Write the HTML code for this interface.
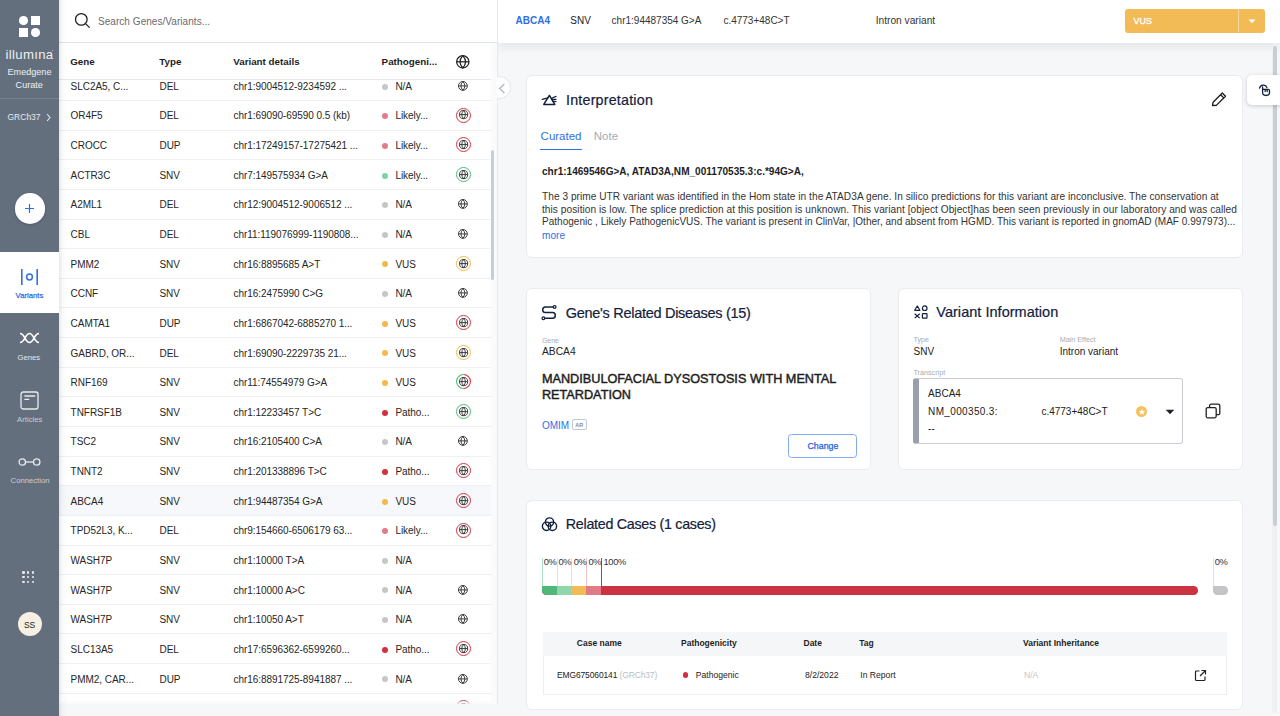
<!DOCTYPE html>
<html><head><meta charset="utf-8"><style>
html,body{margin:0;padding:0;width:1280px;height:716px;overflow:hidden;background:#fff;}
body{position:relative;font-family:"Liberation Sans",sans-serif;}
.t{position:absolute;white-space:nowrap;}
.r{position:absolute;}
</style></head><body>
<div class="r" style="left:497.00px;top:0.00px;width:783.00px;height:716.00px;background:#f6f7f9;"></div>
<div class="r" style="left:497.00px;top:0.00px;width:783.00px;height:43.00px;background:#fff;box-shadow:0 3px 10px rgba(0,0,0,0.09);"></div>
<div class="r" style="left:59.00px;top:0.00px;width:438.00px;height:716.00px;background:#fff;"></div>
<div class="r" style="left:496.00px;top:0.00px;width:1.50px;height:703.80px;background:#e4e7ec;"></div>
<div class="r" style="left:59.00px;top:99.94px;width:431.50px;height:1.00px;background:#eef0f4;"></div>
<div class="t " style="left:70.60px;top:81.73px;font-size:10.0px;line-height:10.0px;font-weight:400;color:#262626;letter-spacing:-0.05px;">SLC2A5, C...</div>
<div class="t " style="left:159.50px;top:81.73px;font-size:10.0px;line-height:10.0px;font-weight:400;color:#262626;letter-spacing:-0.05px;">DEL</div>
<div class="t " style="left:233.50px;top:81.73px;font-size:10.0px;line-height:10.0px;font-weight:400;color:#262626;letter-spacing:-0.05px;">chr1:9004512-9234592 ...</div>
<div class="r" style="left:382.00px;top:83.60px;width:6.00px;height:6.00px;background:#c6c6c6;border-radius:50%;"></div>
<div class="t " style="left:395.40px;top:81.73px;font-size:10.0px;line-height:10.0px;font-weight:400;color:#262626;letter-spacing:-0.05px;">N/A</div>
<svg class="r" style="left:457.40px;top:79.80px;width:11.80px;height:11.80px" viewBox="-5.9 -5.9 11.8 11.8"><g fill="none" stroke="#333" stroke-width="0.95"><circle r="4.43"/><path d="M0 -4.43 Q3.92 0 0 4.43 Q-3.92 0 0 -4.43 Z"/><line x1="-4.43" x2="4.43" y1="0" y2="0"/></g></svg>
<div class="r" style="left:59.00px;top:129.58px;width:431.50px;height:1.00px;background:#eef0f4;"></div>
<div class="t " style="left:70.60px;top:111.38px;font-size:10.0px;line-height:10.0px;font-weight:400;color:#262626;letter-spacing:-0.05px;">OR4F5</div>
<div class="t " style="left:159.50px;top:111.38px;font-size:10.0px;line-height:10.0px;font-weight:400;color:#262626;letter-spacing:-0.05px;">DEL</div>
<div class="t " style="left:233.50px;top:111.38px;font-size:10.0px;line-height:10.0px;font-weight:400;color:#262626;letter-spacing:-0.05px;">chr1:69090-69590 0.5 (kb)</div>
<div class="r" style="left:382.00px;top:113.24px;width:6.00px;height:6.00px;background:#e27c88;border-radius:50%;"></div>
<div class="t " style="left:395.40px;top:111.38px;font-size:10.0px;line-height:10.0px;font-weight:400;color:#262626;letter-spacing:-0.05px;">Likely...</div>
<div class="r" style="left:455.90px;top:107.54px;width:15.00px;height:15.00px;border:1.1px solid #d9333f;border-radius:50%;box-sizing:border-box;"></div>
<svg class="r" style="left:457.70px;top:109.44px;width:11.20px;height:11.20px" viewBox="-5.6 -5.6 11.2 11.2"><g fill="none" stroke="#333" stroke-width="0.95"><circle r="4.12"/><path d="M0 -4.12 Q3.68 0 0 4.12 Q-3.68 0 0 -4.12 Z"/><line x1="-4.12" x2="4.12" y1="0" y2="0"/></g></svg>
<div class="r" style="left:59.00px;top:159.22px;width:431.50px;height:1.00px;background:#eef0f4;"></div>
<div class="t " style="left:70.60px;top:141.02px;font-size:10.0px;line-height:10.0px;font-weight:400;color:#262626;letter-spacing:-0.05px;">CROCC</div>
<div class="t " style="left:159.50px;top:141.02px;font-size:10.0px;line-height:10.0px;font-weight:400;color:#262626;letter-spacing:-0.05px;">DUP</div>
<div class="t " style="left:233.50px;top:141.02px;font-size:10.0px;line-height:10.0px;font-weight:400;color:#262626;letter-spacing:-0.05px;">chr1:17249157-17275421 ...</div>
<div class="r" style="left:382.00px;top:142.88px;width:6.00px;height:6.00px;background:#e27c88;border-radius:50%;"></div>
<div class="t " style="left:395.40px;top:141.02px;font-size:10.0px;line-height:10.0px;font-weight:400;color:#262626;letter-spacing:-0.05px;">Likely...</div>
<div class="r" style="left:455.90px;top:137.18px;width:15.00px;height:15.00px;border:1.1px solid #d9333f;border-radius:50%;box-sizing:border-box;"></div>
<svg class="r" style="left:457.70px;top:139.08px;width:11.20px;height:11.20px" viewBox="-5.6 -5.6 11.2 11.2"><g fill="none" stroke="#333" stroke-width="0.95"><circle r="4.12"/><path d="M0 -4.12 Q3.68 0 0 4.12 Q-3.68 0 0 -4.12 Z"/><line x1="-4.12" x2="4.12" y1="0" y2="0"/></g></svg>
<div class="r" style="left:59.00px;top:188.86px;width:431.50px;height:1.00px;background:#eef0f4;"></div>
<div class="t " style="left:70.60px;top:170.66px;font-size:10.0px;line-height:10.0px;font-weight:400;color:#262626;letter-spacing:-0.05px;">ACTR3C</div>
<div class="t " style="left:159.50px;top:170.66px;font-size:10.0px;line-height:10.0px;font-weight:400;color:#262626;letter-spacing:-0.05px;">SNV</div>
<div class="t " style="left:233.50px;top:170.66px;font-size:10.0px;line-height:10.0px;font-weight:400;color:#262626;letter-spacing:-0.05px;">chr7:149575934 G&gt;A</div>
<div class="r" style="left:382.00px;top:172.52px;width:6.00px;height:6.00px;background:#7fd3a2;border-radius:50%;"></div>
<div class="t " style="left:395.40px;top:170.66px;font-size:10.0px;line-height:10.0px;font-weight:400;color:#262626;letter-spacing:-0.05px;">Likely...</div>
<div class="r" style="left:455.90px;top:166.82px;width:15.00px;height:15.00px;border:1.1px solid #4cbb73;border-radius:50%;box-sizing:border-box;"></div>
<svg class="r" style="left:457.70px;top:168.72px;width:11.20px;height:11.20px" viewBox="-5.6 -5.6 11.2 11.2"><g fill="none" stroke="#333" stroke-width="0.95"><circle r="4.12"/><path d="M0 -4.12 Q3.68 0 0 4.12 Q-3.68 0 0 -4.12 Z"/><line x1="-4.12" x2="4.12" y1="0" y2="0"/></g></svg>
<div class="r" style="left:59.00px;top:218.50px;width:431.50px;height:1.00px;background:#eef0f4;"></div>
<div class="t " style="left:70.60px;top:200.29px;font-size:10.0px;line-height:10.0px;font-weight:400;color:#262626;letter-spacing:-0.05px;">A2ML1</div>
<div class="t " style="left:159.50px;top:200.29px;font-size:10.0px;line-height:10.0px;font-weight:400;color:#262626;letter-spacing:-0.05px;">DEL</div>
<div class="t " style="left:233.50px;top:200.29px;font-size:10.0px;line-height:10.0px;font-weight:400;color:#262626;letter-spacing:-0.05px;">chr12:9004512-9006512 ...</div>
<div class="r" style="left:382.00px;top:202.16px;width:6.00px;height:6.00px;background:#c6c6c6;border-radius:50%;"></div>
<div class="t " style="left:395.40px;top:200.29px;font-size:10.0px;line-height:10.0px;font-weight:400;color:#262626;letter-spacing:-0.05px;">N/A</div>
<svg class="r" style="left:457.40px;top:198.36px;width:11.80px;height:11.80px" viewBox="-5.9 -5.9 11.8 11.8"><g fill="none" stroke="#333" stroke-width="0.95"><circle r="4.43"/><path d="M0 -4.43 Q3.92 0 0 4.43 Q-3.92 0 0 -4.43 Z"/><line x1="-4.43" x2="4.43" y1="0" y2="0"/></g></svg>
<div class="r" style="left:59.00px;top:248.14px;width:431.50px;height:1.00px;background:#eef0f4;"></div>
<div class="t " style="left:70.60px;top:229.93px;font-size:10.0px;line-height:10.0px;font-weight:400;color:#262626;letter-spacing:-0.05px;">CBL</div>
<div class="t " style="left:159.50px;top:229.93px;font-size:10.0px;line-height:10.0px;font-weight:400;color:#262626;letter-spacing:-0.05px;">DEL</div>
<div class="t " style="left:233.50px;top:229.93px;font-size:10.0px;line-height:10.0px;font-weight:400;color:#262626;letter-spacing:-0.05px;">chr11:119076999-1190808...</div>
<div class="r" style="left:382.00px;top:231.80px;width:6.00px;height:6.00px;background:#c6c6c6;border-radius:50%;"></div>
<div class="t " style="left:395.40px;top:229.93px;font-size:10.0px;line-height:10.0px;font-weight:400;color:#262626;letter-spacing:-0.05px;">N/A</div>
<svg class="r" style="left:457.40px;top:228.00px;width:11.80px;height:11.80px" viewBox="-5.9 -5.9 11.8 11.8"><g fill="none" stroke="#333" stroke-width="0.95"><circle r="4.43"/><path d="M0 -4.43 Q3.92 0 0 4.43 Q-3.92 0 0 -4.43 Z"/><line x1="-4.43" x2="4.43" y1="0" y2="0"/></g></svg>
<div class="r" style="left:59.00px;top:277.78px;width:431.50px;height:1.00px;background:#eef0f4;"></div>
<div class="t " style="left:70.60px;top:259.58px;font-size:10.0px;line-height:10.0px;font-weight:400;color:#262626;letter-spacing:-0.05px;">PMM2</div>
<div class="t " style="left:159.50px;top:259.58px;font-size:10.0px;line-height:10.0px;font-weight:400;color:#262626;letter-spacing:-0.05px;">SNV</div>
<div class="t " style="left:233.50px;top:259.58px;font-size:10.0px;line-height:10.0px;font-weight:400;color:#262626;letter-spacing:-0.05px;">chr16:8895685 A&gt;T</div>
<div class="r" style="left:382.00px;top:261.44px;width:6.00px;height:6.00px;background:#f2b94b;border-radius:50%;"></div>
<div class="t " style="left:395.40px;top:259.58px;font-size:10.0px;line-height:10.0px;font-weight:400;color:#262626;letter-spacing:-0.05px;">VUS</div>
<div class="r" style="left:455.90px;top:255.74px;width:15.00px;height:15.00px;border:1.1px solid #f0b94a;border-radius:50%;box-sizing:border-box;"></div>
<svg class="r" style="left:457.70px;top:257.64px;width:11.20px;height:11.20px" viewBox="-5.6 -5.6 11.2 11.2"><g fill="none" stroke="#333" stroke-width="0.95"><circle r="4.12"/><path d="M0 -4.12 Q3.68 0 0 4.12 Q-3.68 0 0 -4.12 Z"/><line x1="-4.12" x2="4.12" y1="0" y2="0"/></g></svg>
<div class="r" style="left:59.00px;top:307.42px;width:431.50px;height:1.00px;background:#eef0f4;"></div>
<div class="t " style="left:70.60px;top:289.22px;font-size:10.0px;line-height:10.0px;font-weight:400;color:#262626;letter-spacing:-0.05px;">CCNF</div>
<div class="t " style="left:159.50px;top:289.22px;font-size:10.0px;line-height:10.0px;font-weight:400;color:#262626;letter-spacing:-0.05px;">SNV</div>
<div class="t " style="left:233.50px;top:289.22px;font-size:10.0px;line-height:10.0px;font-weight:400;color:#262626;letter-spacing:-0.05px;">chr16:2475990 C&gt;G</div>
<div class="r" style="left:382.00px;top:291.08px;width:6.00px;height:6.00px;background:#c6c6c6;border-radius:50%;"></div>
<div class="t " style="left:395.40px;top:289.22px;font-size:10.0px;line-height:10.0px;font-weight:400;color:#262626;letter-spacing:-0.05px;">N/A</div>
<svg class="r" style="left:457.40px;top:287.28px;width:11.80px;height:11.80px" viewBox="-5.9 -5.9 11.8 11.8"><g fill="none" stroke="#333" stroke-width="0.95"><circle r="4.43"/><path d="M0 -4.43 Q3.92 0 0 4.43 Q-3.92 0 0 -4.43 Z"/><line x1="-4.43" x2="4.43" y1="0" y2="0"/></g></svg>
<div class="r" style="left:59.00px;top:337.06px;width:431.50px;height:1.00px;background:#eef0f4;"></div>
<div class="t " style="left:70.60px;top:318.86px;font-size:10.0px;line-height:10.0px;font-weight:400;color:#262626;letter-spacing:-0.05px;">CAMTA1</div>
<div class="t " style="left:159.50px;top:318.86px;font-size:10.0px;line-height:10.0px;font-weight:400;color:#262626;letter-spacing:-0.05px;">DUP</div>
<div class="t " style="left:233.50px;top:318.86px;font-size:10.0px;line-height:10.0px;font-weight:400;color:#262626;letter-spacing:-0.05px;">chr1:6867042-6885270 1...</div>
<div class="r" style="left:382.00px;top:320.72px;width:6.00px;height:6.00px;background:#f2b94b;border-radius:50%;"></div>
<div class="t " style="left:395.40px;top:318.86px;font-size:10.0px;line-height:10.0px;font-weight:400;color:#262626;letter-spacing:-0.05px;">VUS</div>
<div class="r" style="left:455.90px;top:315.02px;width:15.00px;height:15.00px;border:1.1px solid #d9333f;border-radius:50%;box-sizing:border-box;"></div>
<svg class="r" style="left:457.70px;top:316.92px;width:11.20px;height:11.20px" viewBox="-5.6 -5.6 11.2 11.2"><g fill="none" stroke="#333" stroke-width="0.95"><circle r="4.12"/><path d="M0 -4.12 Q3.68 0 0 4.12 Q-3.68 0 0 -4.12 Z"/><line x1="-4.12" x2="4.12" y1="0" y2="0"/></g></svg>
<div class="r" style="left:59.00px;top:366.70px;width:431.50px;height:1.00px;background:#eef0f4;"></div>
<div class="t " style="left:70.60px;top:348.50px;font-size:10.0px;line-height:10.0px;font-weight:400;color:#262626;letter-spacing:-0.05px;">GABRD, OR...</div>
<div class="t " style="left:159.50px;top:348.50px;font-size:10.0px;line-height:10.0px;font-weight:400;color:#262626;letter-spacing:-0.05px;">DEL</div>
<div class="t " style="left:233.50px;top:348.50px;font-size:10.0px;line-height:10.0px;font-weight:400;color:#262626;letter-spacing:-0.05px;">chr1:69090-2229735 21...</div>
<div class="r" style="left:382.00px;top:350.36px;width:6.00px;height:6.00px;background:#f2b94b;border-radius:50%;"></div>
<div class="t " style="left:395.40px;top:348.50px;font-size:10.0px;line-height:10.0px;font-weight:400;color:#262626;letter-spacing:-0.05px;">VUS</div>
<div class="r" style="left:455.90px;top:344.66px;width:15.00px;height:15.00px;border:1.1px solid #f0b94a;border-radius:50%;box-sizing:border-box;"></div>
<svg class="r" style="left:457.70px;top:346.56px;width:11.20px;height:11.20px" viewBox="-5.6 -5.6 11.2 11.2"><g fill="none" stroke="#333" stroke-width="0.95"><circle r="4.12"/><path d="M0 -4.12 Q3.68 0 0 4.12 Q-3.68 0 0 -4.12 Z"/><line x1="-4.12" x2="4.12" y1="0" y2="0"/></g></svg>
<div class="r" style="left:59.00px;top:396.34px;width:431.50px;height:1.00px;background:#eef0f4;"></div>
<div class="t " style="left:70.60px;top:378.13px;font-size:10.0px;line-height:10.0px;font-weight:400;color:#262626;letter-spacing:-0.05px;">RNF169</div>
<div class="t " style="left:159.50px;top:378.13px;font-size:10.0px;line-height:10.0px;font-weight:400;color:#262626;letter-spacing:-0.05px;">SNV</div>
<div class="t " style="left:233.50px;top:378.13px;font-size:10.0px;line-height:10.0px;font-weight:400;color:#262626;letter-spacing:-0.05px;">chr11:74554979 G&gt;A</div>
<div class="r" style="left:382.00px;top:380.00px;width:6.00px;height:6.00px;background:#f2b94b;border-radius:50%;"></div>
<div class="t " style="left:395.40px;top:378.13px;font-size:10.0px;line-height:10.0px;font-weight:400;color:#262626;letter-spacing:-0.05px;">VUS</div>
<svg class="r" style="left:455.90px;top:374.30px;width:15px;height:15px" viewBox="0 0 15 15"><path d="M7.5 0.55 A6.95 6.95 0 0 1 7.5 14.45" fill="none" stroke="#d9333f" stroke-width="1.1"/><path d="M7.5 14.45 A6.95 6.95 0 0 1 7.5 0.55" fill="none" stroke="#4cbb73" stroke-width="1.1"/></svg>
<svg class="r" style="left:457.70px;top:376.20px;width:11.20px;height:11.20px" viewBox="-5.6 -5.6 11.2 11.2"><g fill="none" stroke="#333" stroke-width="0.95"><circle r="4.12"/><path d="M0 -4.12 Q3.68 0 0 4.12 Q-3.68 0 0 -4.12 Z"/><line x1="-4.12" x2="4.12" y1="0" y2="0"/></g></svg>
<div class="r" style="left:59.00px;top:425.98px;width:431.50px;height:1.00px;background:#eef0f4;"></div>
<div class="t " style="left:70.60px;top:407.78px;font-size:10.0px;line-height:10.0px;font-weight:400;color:#262626;letter-spacing:-0.05px;">TNFRSF1B</div>
<div class="t " style="left:159.50px;top:407.78px;font-size:10.0px;line-height:10.0px;font-weight:400;color:#262626;letter-spacing:-0.05px;">SNV</div>
<div class="t " style="left:233.50px;top:407.78px;font-size:10.0px;line-height:10.0px;font-weight:400;color:#262626;letter-spacing:-0.05px;">chr1:12233457 T&gt;C</div>
<div class="r" style="left:382.00px;top:409.64px;width:6.00px;height:6.00px;background:#d3303f;border-radius:50%;"></div>
<div class="t " style="left:395.40px;top:407.78px;font-size:10.0px;line-height:10.0px;font-weight:400;color:#262626;letter-spacing:-0.05px;">Patho...</div>
<div class="r" style="left:455.90px;top:403.94px;width:15.00px;height:15.00px;border:1.1px solid #4cbb73;border-radius:50%;box-sizing:border-box;"></div>
<svg class="r" style="left:457.70px;top:405.84px;width:11.20px;height:11.20px" viewBox="-5.6 -5.6 11.2 11.2"><g fill="none" stroke="#333" stroke-width="0.95"><circle r="4.12"/><path d="M0 -4.12 Q3.68 0 0 4.12 Q-3.68 0 0 -4.12 Z"/><line x1="-4.12" x2="4.12" y1="0" y2="0"/></g></svg>
<div class="r" style="left:59.00px;top:455.62px;width:431.50px;height:1.00px;background:#eef0f4;"></div>
<div class="t " style="left:70.60px;top:437.42px;font-size:10.0px;line-height:10.0px;font-weight:400;color:#262626;letter-spacing:-0.05px;">TSC2</div>
<div class="t " style="left:159.50px;top:437.42px;font-size:10.0px;line-height:10.0px;font-weight:400;color:#262626;letter-spacing:-0.05px;">SNV</div>
<div class="t " style="left:233.50px;top:437.42px;font-size:10.0px;line-height:10.0px;font-weight:400;color:#262626;letter-spacing:-0.05px;">chr16:2105400 C&gt;A</div>
<div class="r" style="left:382.00px;top:439.28px;width:6.00px;height:6.00px;background:#c6c6c6;border-radius:50%;"></div>
<div class="t " style="left:395.40px;top:437.42px;font-size:10.0px;line-height:10.0px;font-weight:400;color:#262626;letter-spacing:-0.05px;">N/A</div>
<svg class="r" style="left:457.40px;top:435.48px;width:11.80px;height:11.80px" viewBox="-5.9 -5.9 11.8 11.8"><g fill="none" stroke="#333" stroke-width="0.95"><circle r="4.43"/><path d="M0 -4.43 Q3.92 0 0 4.43 Q-3.92 0 0 -4.43 Z"/><line x1="-4.43" x2="4.43" y1="0" y2="0"/></g></svg>
<div class="r" style="left:59.00px;top:485.26px;width:431.50px;height:1.00px;background:#eef0f4;"></div>
<div class="t " style="left:70.60px;top:467.06px;font-size:10.0px;line-height:10.0px;font-weight:400;color:#262626;letter-spacing:-0.05px;">TNNT2</div>
<div class="t " style="left:159.50px;top:467.06px;font-size:10.0px;line-height:10.0px;font-weight:400;color:#262626;letter-spacing:-0.05px;">SNV</div>
<div class="t " style="left:233.50px;top:467.06px;font-size:10.0px;line-height:10.0px;font-weight:400;color:#262626;letter-spacing:-0.05px;">chr1:201338896 T&gt;C</div>
<div class="r" style="left:382.00px;top:468.92px;width:6.00px;height:6.00px;background:#d3303f;border-radius:50%;"></div>
<div class="t " style="left:395.40px;top:467.06px;font-size:10.0px;line-height:10.0px;font-weight:400;color:#262626;letter-spacing:-0.05px;">Patho...</div>
<div class="r" style="left:455.90px;top:463.22px;width:15.00px;height:15.00px;border:1.1px solid #d9333f;border-radius:50%;box-sizing:border-box;"></div>
<svg class="r" style="left:457.70px;top:465.12px;width:11.20px;height:11.20px" viewBox="-5.6 -5.6 11.2 11.2"><g fill="none" stroke="#333" stroke-width="0.95"><circle r="4.12"/><path d="M0 -4.12 Q3.68 0 0 4.12 Q-3.68 0 0 -4.12 Z"/><line x1="-4.12" x2="4.12" y1="0" y2="0"/></g></svg>
<div class="r" style="left:59.00px;top:485.76px;width:431.50px;height:29.64px;background:#f7f8fb;"></div>
<div class="r" style="left:59.00px;top:514.90px;width:431.50px;height:1.00px;background:#eef0f4;"></div>
<div class="t " style="left:70.60px;top:496.70px;font-size:10.0px;line-height:10.0px;font-weight:400;color:#262626;letter-spacing:-0.05px;">ABCA4</div>
<div class="t " style="left:159.50px;top:496.70px;font-size:10.0px;line-height:10.0px;font-weight:400;color:#262626;letter-spacing:-0.05px;">SNV</div>
<div class="t " style="left:233.50px;top:496.70px;font-size:10.0px;line-height:10.0px;font-weight:400;color:#262626;letter-spacing:-0.05px;">chr1:94487354 G&gt;A</div>
<div class="r" style="left:382.00px;top:498.56px;width:6.00px;height:6.00px;background:#f2b94b;border-radius:50%;"></div>
<div class="t " style="left:395.40px;top:496.70px;font-size:10.0px;line-height:10.0px;font-weight:400;color:#262626;letter-spacing:-0.05px;">VUS</div>
<div class="r" style="left:455.90px;top:492.86px;width:15.00px;height:15.00px;border:1.1px solid #d9333f;border-radius:50%;box-sizing:border-box;"></div>
<svg class="r" style="left:457.70px;top:494.76px;width:11.20px;height:11.20px" viewBox="-5.6 -5.6 11.2 11.2"><g fill="none" stroke="#333" stroke-width="0.95"><circle r="4.12"/><path d="M0 -4.12 Q3.68 0 0 4.12 Q-3.68 0 0 -4.12 Z"/><line x1="-4.12" x2="4.12" y1="0" y2="0"/></g></svg>
<div class="r" style="left:59.00px;top:544.54px;width:431.50px;height:1.00px;background:#eef0f4;"></div>
<div class="t " style="left:70.60px;top:526.34px;font-size:10.0px;line-height:10.0px;font-weight:400;color:#262626;letter-spacing:-0.05px;">TPD52L3, K...</div>
<div class="t " style="left:159.50px;top:526.34px;font-size:10.0px;line-height:10.0px;font-weight:400;color:#262626;letter-spacing:-0.05px;">DEL</div>
<div class="t " style="left:233.50px;top:526.34px;font-size:10.0px;line-height:10.0px;font-weight:400;color:#262626;letter-spacing:-0.05px;">chr9:154660-6506179 63...</div>
<div class="r" style="left:382.00px;top:528.20px;width:6.00px;height:6.00px;background:#e27c88;border-radius:50%;"></div>
<div class="t " style="left:395.40px;top:526.34px;font-size:10.0px;line-height:10.0px;font-weight:400;color:#262626;letter-spacing:-0.05px;">Likely...</div>
<div class="r" style="left:455.90px;top:522.50px;width:15.00px;height:15.00px;border:1.1px solid #d9333f;border-radius:50%;box-sizing:border-box;"></div>
<svg class="r" style="left:457.70px;top:524.40px;width:11.20px;height:11.20px" viewBox="-5.6 -5.6 11.2 11.2"><g fill="none" stroke="#333" stroke-width="0.95"><circle r="4.12"/><path d="M0 -4.12 Q3.68 0 0 4.12 Q-3.68 0 0 -4.12 Z"/><line x1="-4.12" x2="4.12" y1="0" y2="0"/></g></svg>
<div class="r" style="left:59.00px;top:574.18px;width:431.50px;height:1.00px;background:#eef0f4;"></div>
<div class="t " style="left:70.60px;top:555.98px;font-size:10.0px;line-height:10.0px;font-weight:400;color:#262626;letter-spacing:-0.05px;">WASH7P</div>
<div class="t " style="left:159.50px;top:555.98px;font-size:10.0px;line-height:10.0px;font-weight:400;color:#262626;letter-spacing:-0.05px;">SNV</div>
<div class="t " style="left:233.50px;top:555.98px;font-size:10.0px;line-height:10.0px;font-weight:400;color:#262626;letter-spacing:-0.05px;">chr1:10000 T&gt;A</div>
<div class="r" style="left:382.00px;top:557.84px;width:6.00px;height:6.00px;background:#c6c6c6;border-radius:50%;"></div>
<div class="t " style="left:395.40px;top:555.98px;font-size:10.0px;line-height:10.0px;font-weight:400;color:#262626;letter-spacing:-0.05px;">N/A</div>
<div class="r" style="left:59.00px;top:603.82px;width:431.50px;height:1.00px;background:#eef0f4;"></div>
<div class="t " style="left:70.60px;top:585.62px;font-size:10.0px;line-height:10.0px;font-weight:400;color:#262626;letter-spacing:-0.05px;">WASH7P</div>
<div class="t " style="left:159.50px;top:585.62px;font-size:10.0px;line-height:10.0px;font-weight:400;color:#262626;letter-spacing:-0.05px;">SNV</div>
<div class="t " style="left:233.50px;top:585.62px;font-size:10.0px;line-height:10.0px;font-weight:400;color:#262626;letter-spacing:-0.05px;">chr1:10000 A&gt;C</div>
<div class="r" style="left:382.00px;top:587.48px;width:6.00px;height:6.00px;background:#c6c6c6;border-radius:50%;"></div>
<div class="t " style="left:395.40px;top:585.62px;font-size:10.0px;line-height:10.0px;font-weight:400;color:#262626;letter-spacing:-0.05px;">N/A</div>
<svg class="r" style="left:457.40px;top:583.68px;width:11.80px;height:11.80px" viewBox="-5.9 -5.9 11.8 11.8"><g fill="none" stroke="#333" stroke-width="0.95"><circle r="4.43"/><path d="M0 -4.43 Q3.92 0 0 4.43 Q-3.92 0 0 -4.43 Z"/><line x1="-4.43" x2="4.43" y1="0" y2="0"/></g></svg>
<div class="r" style="left:59.00px;top:633.46px;width:431.50px;height:1.00px;background:#eef0f4;"></div>
<div class="t " style="left:70.60px;top:615.25px;font-size:10.0px;line-height:10.0px;font-weight:400;color:#262626;letter-spacing:-0.05px;">WASH7P</div>
<div class="t " style="left:159.50px;top:615.25px;font-size:10.0px;line-height:10.0px;font-weight:400;color:#262626;letter-spacing:-0.05px;">SNV</div>
<div class="t " style="left:233.50px;top:615.25px;font-size:10.0px;line-height:10.0px;font-weight:400;color:#262626;letter-spacing:-0.05px;">chr1:10050 A&gt;T</div>
<div class="r" style="left:382.00px;top:617.12px;width:6.00px;height:6.00px;background:#c6c6c6;border-radius:50%;"></div>
<div class="t " style="left:395.40px;top:615.25px;font-size:10.0px;line-height:10.0px;font-weight:400;color:#262626;letter-spacing:-0.05px;">N/A</div>
<svg class="r" style="left:457.40px;top:613.32px;width:11.80px;height:11.80px" viewBox="-5.9 -5.9 11.8 11.8"><g fill="none" stroke="#333" stroke-width="0.95"><circle r="4.43"/><path d="M0 -4.43 Q3.92 0 0 4.43 Q-3.92 0 0 -4.43 Z"/><line x1="-4.43" x2="4.43" y1="0" y2="0"/></g></svg>
<div class="r" style="left:59.00px;top:663.10px;width:431.50px;height:1.00px;background:#eef0f4;"></div>
<div class="t " style="left:70.60px;top:644.89px;font-size:10.0px;line-height:10.0px;font-weight:400;color:#262626;letter-spacing:-0.05px;">SLC13A5</div>
<div class="t " style="left:159.50px;top:644.89px;font-size:10.0px;line-height:10.0px;font-weight:400;color:#262626;letter-spacing:-0.05px;">DEL</div>
<div class="t " style="left:233.50px;top:644.89px;font-size:10.0px;line-height:10.0px;font-weight:400;color:#262626;letter-spacing:-0.05px;">chr17:6596362-6599260...</div>
<div class="r" style="left:382.00px;top:646.76px;width:6.00px;height:6.00px;background:#d3303f;border-radius:50%;"></div>
<div class="t " style="left:395.40px;top:644.89px;font-size:10.0px;line-height:10.0px;font-weight:400;color:#262626;letter-spacing:-0.05px;">Patho...</div>
<div class="r" style="left:455.90px;top:641.06px;width:15.00px;height:15.00px;border:1.1px solid #d9333f;border-radius:50%;box-sizing:border-box;"></div>
<svg class="r" style="left:457.70px;top:642.96px;width:11.20px;height:11.20px" viewBox="-5.6 -5.6 11.2 11.2"><g fill="none" stroke="#333" stroke-width="0.95"><circle r="4.12"/><path d="M0 -4.12 Q3.68 0 0 4.12 Q-3.68 0 0 -4.12 Z"/><line x1="-4.12" x2="4.12" y1="0" y2="0"/></g></svg>
<div class="r" style="left:59.00px;top:692.74px;width:431.50px;height:1.00px;background:#eef0f4;"></div>
<div class="t " style="left:70.60px;top:674.53px;font-size:10.0px;line-height:10.0px;font-weight:400;color:#262626;letter-spacing:-0.05px;">PMM2, CAR...</div>
<div class="t " style="left:159.50px;top:674.53px;font-size:10.0px;line-height:10.0px;font-weight:400;color:#262626;letter-spacing:-0.05px;">DUP</div>
<div class="t " style="left:233.50px;top:674.53px;font-size:10.0px;line-height:10.0px;font-weight:400;color:#262626;letter-spacing:-0.05px;">chr16:8891725-8941887 ...</div>
<div class="r" style="left:382.00px;top:676.40px;width:6.00px;height:6.00px;background:#c6c6c6;border-radius:50%;"></div>
<div class="t " style="left:395.40px;top:674.53px;font-size:10.0px;line-height:10.0px;font-weight:400;color:#262626;letter-spacing:-0.05px;">N/A</div>
<svg class="r" style="left:457.40px;top:672.60px;width:11.80px;height:11.80px" viewBox="-5.9 -5.9 11.8 11.8"><g fill="none" stroke="#333" stroke-width="0.95"><circle r="4.43"/><path d="M0 -4.43 Q3.92 0 0 4.43 Q-3.92 0 0 -4.43 Z"/><line x1="-4.43" x2="4.43" y1="0" y2="0"/></g></svg>
<div class="r" style="left:59.00px;top:722.38px;width:431.50px;height:1.00px;background:#eef0f4;"></div>
<div class="t " style="left:70.60px;top:704.18px;font-size:10.0px;line-height:10.0px;font-weight:400;color:#262626;letter-spacing:-0.05px;"></div>
<div class="t " style="left:159.50px;top:704.18px;font-size:10.0px;line-height:10.0px;font-weight:400;color:#262626;letter-spacing:-0.05px;"></div>
<div class="t " style="left:233.50px;top:704.18px;font-size:10.0px;line-height:10.0px;font-weight:400;color:#262626;letter-spacing:-0.05px;"></div>
<div class="r" style="left:455.90px;top:700.34px;width:15.00px;height:15.00px;border:1.1px solid #d9333f;border-radius:50%;box-sizing:border-box;"></div>
<svg class="r" style="left:457.70px;top:702.24px;width:11.20px;height:11.20px" viewBox="-5.6 -5.6 11.2 11.2"><g fill="none" stroke="#333" stroke-width="0.95"><circle r="4.12"/><path d="M0 -4.12 Q3.68 0 0 4.12 Q-3.68 0 0 -4.12 Z"/><line x1="-4.12" x2="4.12" y1="0" y2="0"/></g></svg>
<div class="r" style="left:59.00px;top:43.00px;width:431.80px;height:37.20px;background:#fff;border-bottom:1px solid #e8eaef;box-sizing:border-box;"></div>
<div class="t " style="left:70.25px;top:56.90px;font-size:9.8px;line-height:9.8px;font-weight:700;color:#1e1e1e;">Gene</div>
<div class="t " style="left:159.30px;top:56.90px;font-size:9.8px;line-height:9.8px;font-weight:700;color:#1e1e1e;">Type</div>
<div class="t " style="left:233.20px;top:56.90px;font-size:9.8px;line-height:9.8px;font-weight:700;color:#1e1e1e;">Variant details</div>
<div class="t " style="left:381.60px;top:56.90px;font-size:9.8px;line-height:9.8px;font-weight:700;color:#1e1e1e;">Pathogeni...</div>
<svg class="r" style="left:455.00px;top:54.00px;width:15.60px;height:15.60px" viewBox="-7.8 -7.8 15.6 15.6"><g fill="none" stroke="#222" stroke-width="1.25"><circle r="6.17"/><path d="M0 -6.17 Q5.44 0 0 6.17 Q-5.44 0 0 -6.17 Z"/><line x1="-6.17" x2="6.17" y1="0" y2="0"/></g></svg>
<div class="r" style="left:59.00px;top:0.00px;width:438.00px;height:43.40px;background:#fff;border-bottom:1px solid #dfe3ea;box-sizing:border-box;"></div>
<svg class="r" style="left:74px;top:12px;width:18px;height:18px" viewBox="0 0 18 18"><circle cx="7.3" cy="7.4" r="5.8" fill="none" stroke="#222" stroke-width="1.3"/><line x1="11.5" y1="11.6" x2="15.3" y2="15.4" stroke="#222" stroke-width="1.3" stroke-linecap="round"/></svg>
<div class="t " style="left:98.00px;top:16.73px;font-size:10.0px;line-height:10.0px;font-weight:400;color:#6b6b6b;letter-spacing:0.05px;">Search Genes/Variants...</div>
<div class="r" style="left:490.50px;top:43.40px;width:6.00px;height:672.60px;background:#fafbfc;"></div>
<div class="r" style="left:490.60px;top:150.10px;width:3.30px;height:130.20px;background:#c9cdd6;border-radius:2px;"></div>
<div class="r" style="left:59.00px;top:699.50px;width:431.50px;height:4.30px;background:linear-gradient(to bottom, rgba(246,247,249,0), rgba(246,247,249,0.8));"></div>
<div class="r" style="left:59.00px;top:703.80px;width:438.50px;height:12.20px;background:#f6f7f9;"></div>
<div class="r" style="left:59.00px;top:0.00px;width:9.00px;height:716.00px;background:linear-gradient(to right, rgba(0,0,0,0.09), rgba(0,0,0,0.02) 40%, rgba(0,0,0,0));"></div>
<div class="r" style="left:0.00px;top:0.00px;width:59.00px;height:716.00px;background:#646f7e;"></div>
<div class="r" style="left:19.00px;top:16.30px;width:8.60px;height:8.60px;background:#fff;border-radius:50%;"></div>
<div class="r" style="left:31.40px;top:16.30px;width:8.70px;height:8.40px;background:#fff;"></div>
<div class="r" style="left:19.00px;top:28.30px;width:8.60px;height:8.60px;background:#fff;"></div>
<div class="r" style="left:31.40px;top:28.30px;width:8.70px;height:8.70px;background:#fff;border-radius:50%;"></div>
<div class="t " style="left:5.60px;top:48.13px;font-size:13.2px;line-height:13.2px;font-weight:400;color:rgba(255,255,255,0.9);letter-spacing:0.3px;">illumına</div>
<div class="r" style="left:52.20px;top:50.20px;width:1.30px;height:1.30px;background:rgba(255,255,255,0.7);border-radius:50%;"></div>
<div class="t " style="left:7.50px;top:68.30px;font-size:9.1px;line-height:9.1px;font-weight:400;color:#eef0f3;">Emedgene</div>
<div class="t " style="left:15.60px;top:80.90px;font-size:9.1px;line-height:9.1px;font-weight:400;color:#eef0f3;">Curate</div>
<div class="r" style="left:0.00px;top:97.50px;width:59.00px;height:1.00px;background:#77828f;"></div>
<div class="t " style="left:7.50px;top:113.00px;font-size:8.5px;line-height:8.5px;font-weight:400;color:#e6e9ee;">GRCh37</div>
<svg class="r" style="left:44px;top:113px;width:8px;height:9px" viewBox="0 0 8 9"><path d="M3.1 1.0 L6.0 4.5 L3.1 8.0" fill="none" stroke="#e6e9ee" stroke-width="1.1"/></svg>
<div class="r" style="left:14.60px;top:193.40px;width:30.40px;height:30.40px;background:#fff;border-radius:50%;box-shadow:0 1px 3px rgba(0,0,0,0.2);"></div>
<svg class="r" style="left:22.3px;top:201.1px;width:15px;height:15px" viewBox="0 0 15 15"><path d="M7.5 3 V12 M3 7.5 H12" stroke="#2f6fe4" stroke-width="1.2"/></svg>
<div class="r" style="left:0.00px;top:251.70px;width:59.00px;height:61.60px;background:#fff;"></div>
<svg class="r" style="left:20px;top:267.8px;width:19px;height:18px" viewBox="0 0 19 18"><path d="M1.8 1 V17 M17.2 1 V17" stroke="#2f6fe4" stroke-width="1.6"/><circle cx="9.5" cy="9" r="2.9" fill="none" stroke="#2f6fe4" stroke-width="1.5"/></svg>
<div class="t " style="left:15.60px;top:291.88px;font-size:7.7px;line-height:7.7px;font-weight:400;color:#2f6fe4;-webkit-text-stroke:0.25px #2f6fe4;">Variants</div>
<svg class="r" style="left:19px;top:332px;width:21px;height:12px" viewBox="0 0 21 12"><path d="M1 1.5 C6 1.5 6 10.5 10.5 10.5 C15 10.5 15 1.5 20 1.5 M1 10.5 C6 10.5 6 1.5 10.5 1.5 C15 1.5 15 10.5 20 10.5" fill="none" stroke="#fff" stroke-width="1.6"/></svg>
<div class="t " style="left:17.50px;top:353.78px;font-size:7.7px;line-height:7.7px;font-weight:400;color:#e4e7eb;">Genes</div>
<svg class="r" style="left:20px;top:391px;width:19px;height:19px" viewBox="0 0 19 19"><rect x="1" y="1" width="17" height="17" rx="2.2" fill="none" stroke="#e8ebef" stroke-width="1.3"/><path d="M4.4 5 H15.2 M4.4 8.4 H9.3" stroke="#e8ebef" stroke-width="1.3"/></svg>
<div class="t " style="left:17.10px;top:415.78px;font-size:7.7px;line-height:7.7px;font-weight:400;color:#c9ced5;">Articles</div>
<svg class="r" style="left:18px;top:457px;width:23px;height:10px" viewBox="0 0 23 10"><circle cx="4.3" cy="5" r="3.2" fill="none" stroke="#e8ebef" stroke-width="1.3"/><circle cx="18.7" cy="5" r="3.2" fill="none" stroke="#e8ebef" stroke-width="1.3"/><path d="M7.5 5 H15.5" stroke="#e8ebef" stroke-width="1.3"/></svg>
<div class="t " style="left:10.60px;top:477.48px;font-size:7.7px;line-height:7.7px;font-weight:400;color:#c9ced5;">Connection</div>
<div class="r" style="left:22.00px;top:571.00px;width:2.70px;height:2.70px;background:#e8ebef;border-radius:50%;"></div>
<div class="r" style="left:22.00px;top:575.75px;width:2.70px;height:2.70px;background:#e8ebef;border-radius:50%;"></div>
<div class="r" style="left:22.00px;top:580.50px;width:2.70px;height:2.70px;background:#e8ebef;border-radius:50%;"></div>
<div class="r" style="left:26.75px;top:571.00px;width:2.70px;height:2.70px;background:#e8ebef;border-radius:50%;"></div>
<div class="r" style="left:26.75px;top:575.75px;width:2.70px;height:2.70px;background:#e8ebef;border-radius:50%;"></div>
<div class="r" style="left:26.75px;top:580.50px;width:2.70px;height:2.70px;background:#e8ebef;border-radius:50%;"></div>
<div class="r" style="left:31.50px;top:571.00px;width:2.70px;height:2.70px;background:#e8ebef;border-radius:50%;"></div>
<div class="r" style="left:31.50px;top:575.75px;width:2.70px;height:2.70px;background:#e8ebef;border-radius:50%;"></div>
<div class="r" style="left:31.50px;top:580.50px;width:2.70px;height:2.70px;background:#e8ebef;border-radius:50%;"></div>
<div class="r" style="left:17.80px;top:612.00px;width:24.20px;height:24.20px;background:#f6f0e4;border-radius:50%;"></div>
<div class="t " style="left:23.90px;top:620.92px;font-size:8.6px;line-height:8.6px;font-weight:400;color:#1e1e1e;">SS</div>
<div class="t " style="left:515.60px;top:16.14px;font-size:10px;line-height:10px;font-weight:700;color:#2f6fe4;">ABCA4</div>
<div class="t " style="left:570.30px;top:16.14px;font-size:10px;line-height:10px;font-weight:400;color:#222;">SNV</div>
<div class="t " style="left:611.60px;top:16.14px;font-size:10px;line-height:10px;font-weight:400;color:#333;">chr1:94487354 G&gt;A</div>
<div class="t " style="left:723.40px;top:16.14px;font-size:10px;line-height:10px;font-weight:400;color:#333;">c.4773+48C&gt;T</div>
<div class="t " style="left:875.70px;top:15.97px;font-size:10.2px;line-height:10.2px;font-weight:400;color:#333;">Intron variant</div>
<div class="r" style="left:1124.60px;top:9.00px;width:140.20px;height:23.50px;background:#f2bb55;border-radius:3px;"></div>
<div class="r" style="left:1238.30px;top:9.20px;width:1.00px;height:23.00px;background:rgba(255,255,255,0.45);"></div>
<div class="t " style="left:1133.60px;top:16.67px;font-size:8.9px;line-height:8.9px;font-weight:400;color:#fff;-webkit-text-stroke:0.35px #fff;">VUS</div>
<svg class="r" style="left:1246.8px;top:17.6px;width:10px;height:7px" viewBox="0 0 10 7"><path d="M1.5 1.5 H8.5 L5 5.2 Z" fill="#fff"/></svg>
<div class="r" style="left:1272.40px;top:43.00px;width:4.60px;height:669.60px;background:#eef0f3;border-radius:2.3px;"></div>
<div class="r" style="left:1272.60px;top:46.00px;width:4.30px;height:480.40px;background:#c9cdd6;border-radius:2px;"></div>
<div class="r" style="left:487.7px;top:75.9px;width:23.5px;height:23.5px;border-radius:50%;background:#fff;border:1px solid #e3e6eb;box-sizing:border-box;clip-path:inset(0 0 0 9.1px);"></div>
<svg class="r" style="left:498px;top:82.5px;width:8px;height:11px" viewBox="0 0 8 11"><path d="M6.4 1 L1.6 5.5 L6.4 10" fill="none" stroke="#b3b8c2" stroke-width="1.35"/></svg>
<div class="r" style="left:526.00px;top:75.30px;width:716.70px;height:183.00px;background:#fff;border:1px solid #e9ebef;border-radius:6px;box-sizing:border-box;"></div>
<div class="r" style="left:526.20px;top:287.50px;width:345.30px;height:182.30px;background:#fff;border:1px solid #e9ebef;border-radius:6px;box-sizing:border-box;"></div>
<div class="r" style="left:897.80px;top:287.50px;width:344.90px;height:182.30px;background:#fff;border:1px solid #e9ebef;border-radius:6px;box-sizing:border-box;"></div>
<div class="r" style="left:526.20px;top:500.00px;width:716.70px;height:210.00px;background:#fff;border:1px solid #e9ebef;border-radius:6px;box-sizing:border-box;"></div>
<svg class="r" style="left:538px;top:88px;width:24px;height:24px" viewBox="0 0 24 24"><path d="M5.8 16.4 H16.8 L11.4 7.3 Z" fill="none" stroke="#14213d" stroke-width="1.5" stroke-linejoin="round"/><path d="M4.3 11.4 L9.8 9.9" fill="none" stroke="#14213d" stroke-width="1.4" stroke-linecap="round"/><path d="M13.6 10.2 L18 8.4 M13.9 11.4 L18 11.4 M14.6 13.0 L18 13.6" fill="none" stroke="#14213d" stroke-width="1.2" stroke-linecap="round"/></svg>
<div class="t " style="left:566.00px;top:93.30px;font-size:14.3px;line-height:14.3px;font-weight:400;color:#14213d;letter-spacing:0.2px;-webkit-text-stroke:0.2px #14213d;">Interpretation</div>
<svg class="r" style="left:1211px;top:91px;width:16px;height:16px" viewBox="0 0 16 16"><path d="M1.5 14.5 L2.1 11.2 L11.3 2 L14.5 5.2 L5.3 14.4 Z M9.6 3.7 L12.8 6.9" fill="none" stroke="#1a1a1a" stroke-width="1.3" stroke-linejoin="round"/></svg>
<div class="t " style="left:540.60px;top:131.27px;font-size:11.5px;line-height:11.5px;font-weight:400;color:#2f6fe4;">Curated</div>
<div class="t " style="left:593.75px;top:131.27px;font-size:11.5px;line-height:11.5px;font-weight:400;color:#a6abb4;">Note</div>
<div class="r" style="left:540.40px;top:148.70px;width:41.80px;height:1.80px;background:#2f6fe4;border-radius:1px;"></div>
<div class="t " style="left:542.00px;top:166.69px;font-size:10.05px;line-height:10.05px;font-weight:700;color:#1e1e1e;">chr1:1469546G&gt;A, ATAD3A,NM_001170535.3:c.*94G&gt;A,</div>
<div class="t " style="left:542.00px;top:192.01px;font-size:10.15px;line-height:10.15px;font-weight:400;color:#333;letter-spacing:0.035px;">The 3 prime UTR variant was identified in the Hom state in the ATAD3A gene. In silico predictions for this variant are inconclusive. The conservation at</div>
<div class="t " style="left:542.00px;top:204.51px;font-size:10.15px;line-height:10.15px;font-weight:400;color:#333;letter-spacing:0.055px;">this position is low. The splice prediction at this position is unknown. This variant [object Object]has been seen previously in our laboratory and was called</div>
<div class="t " style="left:542.00px;top:217.09px;font-size:10.05px;line-height:10.05px;font-weight:400;color:#333;">Pathogenic , Likely PathogenicVUS. The variant is present in ClinVar, |Other, and absent from HGMD. This variant is reported in gnomAD (MAF 0.997973)...</div>
<div class="t " style="left:542.00px;top:231.11px;font-size:10.15px;line-height:10.15px;font-weight:400;color:#2f6fe4;">more</div>
<div class="r" style="left:1246.80px;top:75.40px;width:40.00px;height:29.30px;background:#fff;border-radius:5px;box-shadow:0 1px 4px rgba(0,0,0,0.18);"></div>
<svg class="r" style="left:1250px;top:76px;width:28px;height:28px" viewBox="0 0 28 28"><path d="M9.6 12.2 A3.8 3.8 0 0 1 16.9 11.6" fill="none" stroke="#14213d" stroke-width="1.3" stroke-linecap="round"/><path d="M12.6 10.9 V16.6 C12.6 18.5 14 19.5 16 19.5 C18 19.5 19.5 18.5 19.5 16.6 V14.6 C19.5 13.8 19 13.3 18.2 13.3 H13.4 M15.2 13.6 V15.6 M17.2 13.6 V15.6" fill="none" stroke="#14213d" stroke-width="1.3" stroke-linecap="round" stroke-linejoin="round"/></svg>
<svg class="r" style="left:541px;top:304.6px;width:16px;height:16px" viewBox="0 0 16 16"><path d="M13.5 2 H4.5 A2.8 2.8 0 0 0 4.5 7.6 H11.5 A2.8 2.8 0 0 1 11.5 13.2 H2.5" fill="none" stroke="#14213d" stroke-width="1.5"/><circle cx="13.6" cy="2" r="1.4" fill="#fff" stroke="#14213d" stroke-width="1.2"/><circle cx="2.4" cy="13.2" r="1.4" fill="#fff" stroke="#14213d" stroke-width="1.2"/></svg>
<div class="t " style="left:565.80px;top:305.53px;font-size:14.5px;line-height:14.5px;font-weight:400;color:#14213d;letter-spacing:-0.29px;-webkit-text-stroke:0.2px #14213d;">Gene&#39;s Related Diseases (15)</div>
<div class="t " style="left:541.90px;top:336.67px;font-size:7.0px;line-height:7.0px;font-weight:400;color:#a7acb4;">Gene</div>
<div class="t " style="left:541.90px;top:346.68px;font-size:10.3px;line-height:10.3px;font-weight:400;color:#222;">ABCA4</div>
<div class="t " style="left:541.90px;top:372.55px;font-size:12.7px;line-height:12.7px;font-weight:400;color:#1e1e1e;-webkit-text-stroke:0.45px #1e1e1e;">MANDIBULOFACIAL DYSOSTOSIS WITH MENTAL</div>
<div class="t " style="left:541.90px;top:389.35px;font-size:12.7px;line-height:12.7px;font-weight:400;color:#1e1e1e;-webkit-text-stroke:0.45px #1e1e1e;">RETARDATION</div>
<div class="t " style="left:541.90px;top:420.54px;font-size:10px;line-height:10px;font-weight:400;color:#2f6fe4;">OMIM</div>
<div class="r" style="left:572.00px;top:419.20px;width:14.60px;height:11.20px;border:1px solid #c3c7cf;border-radius:2px;box-sizing:border-box;"></div>
<div class="t " style="left:575.30px;top:422.56px;font-size:5.6px;line-height:5.6px;font-weight:700;color:#8a9099;">AR</div>
<div class="r" style="left:788.30px;top:434.40px;width:68.50px;height:23.70px;border:1.3px solid #86a9f3;border-radius:3.5px;box-sizing:border-box;"></div>
<div class="t " style="left:807.40px;top:442.07px;font-size:8.9px;line-height:8.9px;font-weight:400;color:#2a62d9;-webkit-text-stroke:0.25px #2a62d9;">Change</div>
<svg class="r" style="left:912.5px;top:305px;width:16px;height:15px" viewBox="0 0 16 15"><path d="M1.7 5.3 L4.3 1.0 L6.9 5.3 Z" fill="none" stroke="#14213d" stroke-width="1.2" stroke-linejoin="round"/><circle cx="11.7" cy="3.2" r="2.3" fill="none" stroke="#14213d" stroke-width="1.2"/><path d="M1.7 8.7 L6.7 13.1 M6.7 8.7 L1.7 13.1" stroke="#14213d" stroke-width="1.2"/><rect x="9.4" y="8.7" width="4.6" height="4.4" rx="0.6" fill="none" stroke="#14213d" stroke-width="1.2"/></svg>
<div class="t " style="left:936.30px;top:305.33px;font-size:14.5px;line-height:14.5px;font-weight:400;color:#14213d;letter-spacing:0.03px;-webkit-text-stroke:0.2px #14213d;">Variant Information</div>
<div class="t " style="left:913.50px;top:335.71px;font-size:7.2px;line-height:7.2px;font-weight:400;color:#a7acb4;">Type</div>
<div class="t " style="left:1059.70px;top:335.71px;font-size:7.2px;line-height:7.2px;font-weight:400;color:#a7acb4;">Main Effect</div>
<div class="t " style="left:913.50px;top:346.84px;font-size:10px;line-height:10px;font-weight:400;color:#222;">SNV</div>
<div class="t " style="left:1059.70px;top:346.84px;font-size:10px;line-height:10px;font-weight:400;color:#222;">Intron variant</div>
<div class="t " style="left:913.50px;top:368.71px;font-size:7.2px;line-height:7.2px;font-weight:400;color:#a7acb4;">Transcript</div>
<div class="r" style="left:912.90px;top:378.40px;width:270.50px;height:65.20px;border:1px solid #c9ccd3;border-radius:3px;box-sizing:border-box;border-left:6px solid #9aa0ab;"></div>
<div class="t " style="left:928.10px;top:388.84px;font-size:10px;line-height:10px;font-weight:400;color:#222;">ABCA4</div>
<div class="t " style="left:928.10px;top:406.54px;font-size:10px;line-height:10px;font-weight:400;color:#222;letter-spacing:0.35px;">NM_000350.3:</div>
<div class="t " style="left:1041.40px;top:406.54px;font-size:10px;line-height:10px;font-weight:400;color:#222;">c.4773+48C&gt;T</div>
<div class="t " style="left:928.10px;top:423.84px;font-size:10px;line-height:10px;font-weight:400;color:#222;">--</div>
<div class="r" style="left:1135.90px;top:405.80px;width:11.60px;height:11.60px;background:#f2c35e;border-radius:50%;"></div>
<svg class="r" style="left:1137.7px;top:407.6px;width:8px;height:8px" viewBox="0 0 8 8"><path d="M4 0.8 L4.9 3 L7.2 3.1 L5.4 4.5 L6 6.8 L4 5.5 L2 6.8 L2.6 4.5 L0.8 3.1 L3.1 3 Z" fill="#fff"/></svg>
<svg class="r" style="left:1165px;top:408.5px;width:10px;height:6px" viewBox="0 0 10 6"><path d="M0.7 0.8 H9.3 L5 5.2 Z" fill="#222"/></svg>
<svg class="r" style="left:1205px;top:403px;width:16px;height:16px" viewBox="0 0 16 16"><rect x="1.2" y="4.6" width="10" height="10.2" rx="1.5" fill="none" stroke="#222" stroke-width="1.3"/><path d="M4.6 4.6 V2.7 A1.5 1.5 0 0 1 6.1 1.2 H13.3 A1.5 1.5 0 0 1 14.8 2.7 V10.2 A1.5 1.5 0 0 1 13.3 11.7 H11.2" fill="none" stroke="#222" stroke-width="1.3"/></svg>
<svg class="r" style="left:540.5px;top:516px;width:17px;height:16px" viewBox="0 0 17 16"><circle cx="8.5" cy="6.0" r="4.1" fill="none" stroke="#14213d" stroke-width="1.4"/><circle cx="5.6" cy="10.3" r="4.2" fill="none" stroke="#14213d" stroke-width="1.4"/><circle cx="11.4" cy="10.3" r="4.2" fill="none" stroke="#14213d" stroke-width="1.4"/></svg>
<div class="t " style="left:565.80px;top:517.20px;font-size:14.3px;line-height:14.3px;font-weight:400;color:#14213d;letter-spacing:-0.29px;-webkit-text-stroke:0.2px #14213d;">Related Cases (1 cases)</div>
<div class="r" style="left:541.90px;top:557.80px;width:1.00px;height:29.00px;background:#4fb878;opacity:0.45;"></div>
<div class="r" style="left:556.70px;top:557.80px;width:1.00px;height:29.00px;background:#8fd6ac;opacity:0.45;"></div>
<div class="r" style="left:571.30px;top:557.80px;width:1.00px;height:29.00px;background:#f2bb55;opacity:0.45;"></div>
<div class="r" style="left:586.10px;top:557.80px;width:1.00px;height:29.00px;background:#e07a85;opacity:0.45;"></div>
<div class="r" style="left:601.00px;top:557.80px;width:1.00px;height:29.00px;background:#cc3340;"></div>
<div class="r" style="left:542.1px;top:586.3px;width:656.2px;height:8.6px;border-radius:0 4.3px 4.3px 4.3px;overflow:hidden;background:#cc3340;"><div style="position:absolute;left:0;top:0;width:14.8px;height:100%;background:#4fb878"></div><div style="position:absolute;left:14.8px;top:0;width:14.6px;height:100%;background:#8fd6ac"></div><div style="position:absolute;left:29.4px;top:0;width:14.8px;height:100%;background:#f2bb55"></div><div style="position:absolute;left:44.2px;top:0;width:14.8px;height:100%;background:#e07a85"></div></div>
<div class="t " style="left:543.70px;top:558.13px;font-size:9.3px;line-height:9.3px;font-weight:400;color:#333;letter-spacing:-0.4px;">0%</div>
<div class="t " style="left:558.50px;top:558.13px;font-size:9.3px;line-height:9.3px;font-weight:400;color:#333;letter-spacing:-0.4px;">0%</div>
<div class="t " style="left:573.70px;top:558.13px;font-size:9.3px;line-height:9.3px;font-weight:400;color:#333;letter-spacing:-0.4px;">0%</div>
<div class="t " style="left:588.50px;top:558.13px;font-size:9.3px;line-height:9.3px;font-weight:400;color:#333;letter-spacing:-0.4px;">0%</div>
<div class="t " style="left:603.60px;top:558.13px;font-size:9.3px;line-height:9.3px;font-weight:400;color:#333;letter-spacing:-0.4px;">100%</div>
<div class="r" style="left:1213.00px;top:557.80px;width:1.00px;height:29.00px;background:#c4c4c6;opacity:0.5;"></div>
<div class="r" style="left:1213.00px;top:586.30px;width:14.80px;height:8.60px;background:#c4c4c6;border-radius:0 4.3px 4.3px 4.3px;"></div>
<div class="t " style="left:1214.70px;top:558.13px;font-size:9.3px;line-height:9.3px;font-weight:400;color:#333;letter-spacing:-0.4px;">0%</div>
<div class="r" style="left:542.70px;top:632.00px;width:684.00px;height:23.70px;background:#f5f6f8;"></div>
<div class="r" style="left:542.70px;top:655.70px;width:684.00px;height:38.90px;background:#fff;border:1px solid #eceef2;border-top:none;box-sizing:border-box;"></div>
<div class="t " style="left:576.80px;top:639.10px;font-size:8.5px;line-height:8.5px;font-weight:700;color:#1e1e1e;">Case name</div>
<div class="t " style="left:681.00px;top:639.10px;font-size:8.5px;line-height:8.5px;font-weight:700;color:#1e1e1e;">Pathogenicity</div>
<div class="t " style="left:803.50px;top:639.10px;font-size:8.5px;line-height:8.5px;font-weight:700;color:#1e1e1e;">Date</div>
<div class="t " style="left:859.30px;top:639.10px;font-size:8.5px;line-height:8.5px;font-weight:700;color:#1e1e1e;">Tag</div>
<div class="t " style="left:1023.00px;top:639.10px;font-size:8.5px;line-height:8.5px;font-weight:700;color:#1e1e1e;">Variant Inheritance</div>
<div class="t " style="left:557.00px;top:671.15px;font-size:8.45px;line-height:8.45px;font-weight:400;color:#222;letter-spacing:-0.1px;">EMG675060141 <span style="color:#b9bdc4">(GRCh37)</span></div>
<div class="r" style="left:682.60px;top:672.40px;width:5.60px;height:5.60px;background:#d3303f;border-radius:50%;"></div>
<div class="t " style="left:695.80px;top:671.02px;font-size:8.6px;line-height:8.6px;font-weight:400;color:#222;">Pathogenic</div>
<div class="t " style="left:805.00px;top:671.02px;font-size:8.6px;line-height:8.6px;font-weight:400;color:#222;">8/2/2022</div>
<div class="t " style="left:860.30px;top:671.02px;font-size:8.6px;line-height:8.6px;font-weight:400;color:#222;">In Report</div>
<div class="t " style="left:1024.00px;top:671.02px;font-size:8.6px;line-height:8.6px;font-weight:400;color:#c2c6cc;">N/A</div>
<svg class="r" style="left:1194px;top:669px;width:13px;height:13px" viewBox="0 0 13 13"><path d="M5.5 2 H2.5 A1 1 0 0 0 1.5 3 V10.5 A1 1 0 0 0 2.5 11.5 H10 A1 1 0 0 0 11 10.5 V7.5" fill="none" stroke="#222" stroke-width="1.2"/><path d="M7.5 1.5 H11.5 V5.5 M11.5 1.5 L6 7" fill="none" stroke="#222" stroke-width="1.2"/></svg>
</body></html>
